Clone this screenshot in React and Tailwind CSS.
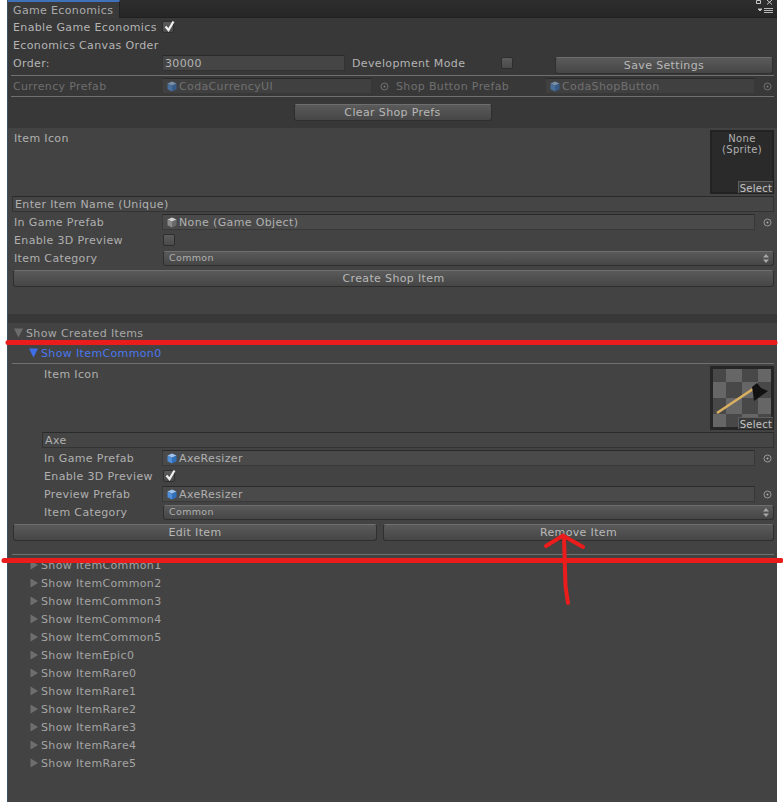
const font = { fontFamily: '"DejaVu Sans", sans-serif' };

const Cube = ({ grey, dim }) => (
  <svg width="10" height="11" viewBox="0 0 10 11" className={`shrink-0 ${dim ? "opacity-60" : ""}`}>
    <path d="M5 0.5 9.5 2.5 5 4.7 0.5 2.5Z" fill={grey ? "#d0d0d0" : "#9cc4ee"} />
    <path d="M0.5 2.5 5 4.7V10.5L0.5 8.2Z" fill={grey ? "#8a8a8a" : "#4f8fd8"} />
    <path d="M9.5 2.5 5 4.7V10.5L9.5 8.2Z" fill={grey ? "#6a6a6a" : "#3370bb"} />
  </svg>
);

const Picker = () => (
  <svg width="9" height="9" viewBox="0 0 9 9" className="shrink-0">
    <circle cx="4.5" cy="4.5" r="3.5" fill="none" stroke="#9a9a9a" />
    <circle cx="4.5" cy="4.5" r="1" fill="#b0b0b0" />
  </svg>
);

const Check = ({ checked }) => (
  <div className="relative w-3 h-3 rounded-[2px] border border-[#2e2e2e] bg-gradient-to-b from-[#5c5c5c] to-[#4a4a4a]">
    {checked && (
      <svg width="14" height="14" viewBox="0 0 14 14" className="absolute -top-[3px] left-0">
        <path d="M2.5 7.5 5.5 11 10.5 2.5" fill="none" stroke="#f0f0f0" strokeWidth="2.2" />
      </svg>
    )}
  </div>
);

const Btn = ({ children, className = "" }) => (
  <div className={`h-[17px] flex items-center justify-center rounded-[3px] border border-[#2f2f2f] border-t-[#6e6e6e] bg-gradient-to-b from-[#5a5a5a] to-[#464646] text-[#b8b8b8] ${className}`}>
    <span className="pt-[2px]">{children}</span>
  </div>
);

const ObjField = ({ icon, grey, dim, children, className = "" }) => (
  <div className={`h-4 flex items-center gap-[2px] pl-[4px] border border-[#383838] border-t-[#2a2a2a] bg-[#4a4a4a] ${className}`}>
    {icon && <Cube grey={grey} dim={dim} />}
    <span className="pt-[2px]">{children}</span>
  </div>
);

const TextField = ({ children, className = "" }) => (
  <div className={`h-4 flex items-center pl-[2px] border border-[#333] border-t-[#2a2a2a] bg-[#454545] ${className}`}>
    <span className="pt-[2px]">{children}</span>
  </div>
);

const Row = ({ label, width, dim, children, className = "" }) => (
  <div className={`h-[18px] flex items-center ${className}`}>
    <span style={{ width }} className={`shrink-0 pt-[2px] ${dim ? "text-[#6e6e6e]" : ""}`}>{label}</span>
    {children}
  </div>
);

const Popup = () => (
  <div className="flex-1 h-[15px] flex items-center justify-between pl-[5px] pr-[4px] rounded-[3px] border border-[#2f2f2f] border-t-[#6e6e6e] bg-gradient-to-b from-[#5a5a5a] to-[#464646] text-[9.5px] tracking-[0.35px]">
    <span>Common</span>
    <svg width="6" height="9" viewBox="0 0 6 9">
      <path d="M3 0 6 3.5H0ZM3 9 0 5.500H6Z" fill="#a8a8a8" />
    </svg>
  </div>
);

const Select = ({ className = "" }) => (
  <div className={`absolute w-[35px] h-[12px] flex items-center justify-center bg-[#3a3a3a] border-t border-l border-[#5e5e5e] text-[10px] tracking-[0.3px] text-[#c4c4c4] ${className}`}>
    <span className="pt-[1px]">Select</span>
  </div>
);

const Tri = ({ open, blue }) => (
  <svg width={open ? 9 : 8} height="10" viewBox={open ? "0 0 9 10" : "0 0 8 10"} className="shrink-0">
    <path d={open ? "M0 0.500H9L4.500 9.500Z" : "M0.500 0.500 8 5 0.500 9.500Z"} fill={blue ? "#3f6fe8" : open ? "#6c6c6c" : "#6e6e6e"} />
  </svg>
);

const Axe = () => (
  <svg width="58" height="58" viewBox="0 0 58 58" className="block">
    <rect width="58" height="58" fill="#484848" />
    <path d="M13 0H29V13H13ZM45 0H58V13H45ZM0 13H13V29H0ZM29 13H45V29H29ZM13 29H29V45H13ZM45 29H58V45H45ZM0 45H13V58H0ZM29 45H45V58H29Z" fill="#666666" />
    <path d="M4 44 40 20" stroke="#d8b060" strokeWidth="2.6" />
    <path d="M39 18 44 14 48 19 55 22 41 32 40 24Z" fill="#111111" />
  </svg>
);

const collapsed = ["ItemCommon1", "ItemCommon2", "ItemCommon3", "ItemCommon4", "ItemCommon5", "ItemEpic0", "ItemRare0", "ItemRare1", "ItemRare2", "ItemRare3", "ItemRare4", "ItemRare5"];

export default function App() {
  return (
    <div style={font} className="relative w-[783px] h-[802px] overflow-hidden bg-white text-[11px] tracking-[0.36px] whitespace-nowrap text-[#b0b0b0]">
      <div className="ml-[7px] w-[770px] h-full flex flex-col bg-[#434343] border-l border-[#3c5060]">
        {/* Tab strip */}
        <div className="relative h-[18px] shrink-0 flex bg-gradient-to-b from-[#2e2e2e] to-[#262626] border-b border-[#1f1f1f]">
          <div className="w-[112px] h-[18px] flex items-center pl-[5px] bg-[#3a3a3a] border-t-2 border-[#3f72b8] border-r border-r-[#222] text-[#ababab]">
            <span className="pt-[2px]">Game Economics</span>
          </div>
          <div className="ml-auto mr-[3px] flex flex-col items-end">
            <svg width="22" height="16" viewBox="0 0 22 16">
              <path d="M4.500 0.500H8.500V3.500H4.500Z" fill="none" stroke="#c8c8c8" />
              <path d="M15 0 20 4.500M20 0 15 4.500" stroke="#c8c8c8" />
              <path d="M6 9H10L8 11ZM12 8.500H21M12 10.500H21M12 12.500H21" fill="#c8c8c8" stroke="#c8c8c8" strokeWidth="0.9" />
            </svg>
          </div>
        </div>

        {/* Settings */}
        <div className="h-[110px] shrink-0 bg-[#383838] pl-[5px] pr-[3px] text-[#b4b4b4]">
          <Row label="Enable Game Economics" width={149}>
            <Check checked />
          </Row>
          <Row label="Economics Canvas Order" />
          <Row label="Order:" width={149}>
            <TextField className="w-[183px] bg-[#454545] border-[#2d2d2d]">30000</TextField>
            <span className="ml-[7px] w-[149px] pt-[2px]">Development Mode</span>
            <Check />
            <Btn className="ml-[42px] w-[218px] mt-[5px]">Save Settings</Btn>
          </Row>
          <div className="mt-[3px] -ml-[2px] h-px bg-[#707070]" />
          <Row label="Currency Prefab" width={149} dim className="h-[20px] text-[#707070]">
            <ObjField icon dim className="w-[210px] bg-[#404040]">CodaCurrencyUI</ObjField>
            <span className="ml-[8px] opacity-60"><Picker /></span>
            <span className="ml-[7px] w-[149px] pt-[2px]">Shop Button Prefab</span>
            <ObjField icon dim className="w-[210px] bg-[#404040]">CodaShopButton</ObjField>
            <span className="ml-[8px] opacity-60"><Picker /></span>
          </Row>
          <div className="-ml-[2px] h-px bg-[#707070]" />
          <div className="mt-[7px] flex justify-center pr-[2px]">
            <Btn className="w-[198px]">Clear Shop Prefs</Btn>
          </div>
        </div>

        {/* Create item */}
        <div className="h-[186px] shrink-0 pl-[4px] pr-[3px]">
          <div className="relative h-[68px] pl-[2px] pt-[3px]">
            <span className="leading-[16px]">Item Icon</span>
            <div className="absolute top-[2px] right-0 w-[64px] h-[64px] bg-[#2a2a2a] border-2 border-[#222] flex flex-col items-center pt-[1px] text-[10px] leading-[11px] tracking-[0.3px]">
              <span>None</span>
              <span>(Sprite)</span>
              <Select className="-bottom-[1px] -right-[1px]" />
            </div>
          </div>
          <TextField>Enter Item Name (Unique)</TextField>
          <div className="pl-[2px]">
            <Row label="In Game Prefab" width={148} className="mt-[1px]">
              <ObjField icon grey className="w-[593px]">None (Game Object)</ObjField>
              <span className="ml-[8px]"><Picker /></span>
            </Row>
            <Row label="Enable 3D Preview" width={149}>
              <Check />
            </Row>
            <Row label="Item Category" width={149}>
              <Popup />
            </Row>
          </div>
          <Btn className="mt-[3px] ml-[1px]">Create Shop Item</Btn>
        </div>

        <div className="h-[9px] shrink-0 bg-[#383838]" />

        {/* Created items */}
        <div className="pl-[6px] pr-[3px] flex-1">
          <div className="h-[20px] flex items-center gap-[3px] text-[#a8a8a8]"><Tri open /><span className="pt-[2px]">Show Created Items</span></div>
          <div className="h-[20px] pl-[15px] flex items-center gap-[3px] text-[#4a78ec]"><Tri open blue /><span className="pt-[2px]">Show ItemCommon0</span></div>
          <div className="-ml-[2px] h-px bg-[#707070]" />
          <div className="relative h-[68px] pl-[30px] pt-[3px]">
            <span className="leading-[16px]">Item Icon</span>
            <div className="absolute top-[2px] right-0 w-[64px] h-[64px] bg-[#2a2a2a] border-[3px] border-[#262626]">
              <Axe />
              <Select className="-bottom-[2px] -right-[2px]" />
            </div>
          </div>
          <TextField className="ml-[28px]">Axe</TextField>
          <div className="pl-[30px]">
            <Row label="In Game Prefab" width={118} className="mt-[1px]">
              <ObjField icon className="w-[593px]">AxeResizer</ObjField>
              <span className="ml-[8px]"><Picker /></span>
            </Row>
            <Row label="Enable 3D Preview" width={119}>
              <Check checked />
            </Row>
            <Row label="Preview Prefab" width={118}>
              <ObjField icon className="w-[593px]">AxeResizer</ObjField>
              <span className="ml-[8px]"><Picker /></span>
            </Row>
            <Row label="Item Category" width={119}>
              <Popup />
            </Row>
          </div>
          <div className="mt-[3px] flex gap-[6px]">
            <Btn className="w-[364px] -ml-[1px]">Edit Item</Btn>
            <Btn className="flex-1">Remove Item</Btn>
          </div>
          <div className="mt-[13px] -ml-[2px] h-px bg-[#707070]" />
          <div className="mt-[1px] pl-[16px]">
            {collapsed.map((name) => (
              <div key={name} className="h-[18px] flex items-center gap-[3px] text-[#a4a4a4]">
                <Tri />
                <span className="pt-[2px]">Show {name}</span>
              </div>
            ))}
          </div>
        </div>
      </div>

      {/* Red annotations drawn on the screenshot */}
      <svg width="783" height="802" viewBox="0 0 783 802" className="absolute inset-0 pointer-events-none">
        <g fill="none" stroke="#ea1c1c" strokeLinecap="round">
          <path d="M8 342.500H775" strokeWidth="5" />
          <path d="M4 560.500H781" strokeWidth="5" />
          <path d="M568 603 565.500 586 564 537" strokeWidth="4" />
          <path d="M546 546 563 535.500 583 547" strokeWidth="4" />
        </g>
      </svg>
    </div>
  );
}
